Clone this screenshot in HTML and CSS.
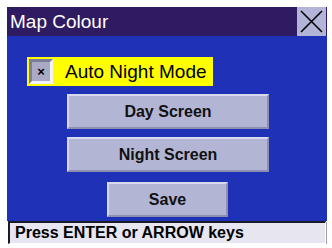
FILE: index.html
```html
<!DOCTYPE html>
<html>
<head>
<meta charset="utf-8">
<link rel="stylesheet" href="styles.css">
</head>
<body>
<div class="window">
  <div class="titlebar">
    <div class="title">Map Colour</div>
    <div class="close">
      <svg width="29" height="29" viewBox="0 0 29 29"><path d="M4 4 L25 25 M25 4 L4 25" stroke="#000" stroke-width="1.6" fill="none"/></svg>
    </div>
  </div>
  <div class="content">
    <div class="check-row">
      <div class="checkbox"><span class="mark">×</span></div>
      <div class="check-label">Auto Night Mode</div>
    </div>
    <div class="btn wide first">Day Screen</div>
    <div class="btn wide second">Night Screen</div>
    <div class="btn narrow third">Save</div>
  </div>
  <div class="status">Press ENTER or ARROW keys</div>
</div>
</body>
</html>
```
FILE: styles.css
```css
html, body {
  margin: 0;
  padding: 0;
  background: #ffffff;
}
body {
  font-family: "Liberation Sans", Arial, sans-serif;
  padding: 7px 0 0 7px;
}
.window {
  width: 320px;
  display: flex;
  flex-direction: column;
}
.titlebar {
  height: 29px;
  background: #2f1b62;
  display: flex;
  align-items: center;
  justify-content: space-between;
}
.title {
  color: #ffffff;
  font-size: 19px;
  padding-left: 3px;
  padding-top: 1px;
}
.close {
  width: 29px;
  height: 29px;
  background: #b3b5d8;
  margin-right: 1px;
}
.close svg {
  display: block;
}
.content {
  height: 185px;
  background: #1f31b6;
  display: flex;
  flex-direction: column;
  align-items: flex-start;
  box-sizing: border-box;
  padding-top: 21px;
}
.check-row {
  margin-left: 20px;
  width: 186px;
  height: 29px;
  background: #ffff00;
  display: flex;
  align-items: center;
  box-sizing: border-box;
  padding-left: 2px;
}
.checkbox {
  width: 24px;
  height: 25px;
  box-sizing: border-box;
  background: #a9aac6;
  border-top: 3px solid #7c7d96;
  border-left: 3px solid #7c7d96;
  border-bottom: 3px solid #f2f2f8;
  border-right: 3px solid #f2f2f8;
  display: flex;
  align-items: center;
  justify-content: center;
}
.mark {
  font-size: 13px;
  font-weight: bold;
  line-height: 1;
  color: #000;
}
.check-label {
  margin-left: 12px;
  font-size: 19px;
  color: #000;
}
.btn {
  height: 35px;
  box-sizing: border-box;
  background: #b3b5d5;
  border-top: 2px solid #d8d9ee;
  border-left: 2px solid #d8d9ee;
  border-bottom: 2px solid #8c8eb2;
  border-right: 2px solid #8c8eb2;
  display: flex;
  align-items: center;
  justify-content: center;
  font-size: 16px;
  font-weight: bold;
  color: #111;
}
.wide {
  width: 202px;
  margin-left: 60px;
}
.narrow {
  width: 121px;
  margin-left: 100px;
}
.first { margin-top: 8px; }
.second { margin-top: 8px; }
.third { margin-top: 10px; }
.status {
  height: 23px;
  width: 318px;
  margin-left: 1px;
  box-sizing: border-box;
  background: #e7e5f0;
  border-top: 2px solid #1a1a2a;
  border-left: 2px solid #1a1a2a;
  border-bottom: 1px solid #ffffff;
  border-right: 1px solid #ffffff;
  box-shadow: 1px 1px 0 #9a9aae;
  font-size: 16px;
  font-weight: bold;
  color: #000;
  padding-left: 5px;
  line-height: 20px;
}
```
